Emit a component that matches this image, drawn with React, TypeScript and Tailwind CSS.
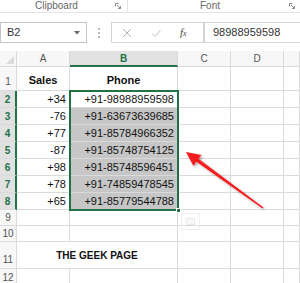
import React from "react";

const cols = [
  { key: "A", w: "w-[53px]" },
  { key: "B", w: "w-[108px]" },
  { key: "C", w: "w-[53px]" },
  { key: "D", w: "w-[53px]" },
  { key: "E", w: "flex-1" },
];

const data: [string, string][] = [
  ["+34", "+91-98988959598"],
  ["-76", "+91-63673639685"],
  ["+77", "+91-85784966352"],
  ["-87", "+91-85748754125"],
  ["+98", "+91-85748596451"],
  ["+78", "+91-74859478545"],
  ["+65", "+91-85779544788"],
];

const cell = "border-r border-b border-[#dadada] shrink-0";

function Launcher() {
  return (
    <svg width="6" height="6" viewBox="0 0 6 6" className="shrink-0">
      <path d="M0.5 0.5H3.5M0.5 0.5V3.5" stroke="#8a8a8a" strokeWidth="1" fill="none" />
      <path d="M2 2L5.5 5.5M5.5 3V5.5H3" stroke="#8a8a8a" strokeWidth="1" fill="none" />
    </svg>
  );
}

function RowHead({ n, sel, h, end }: { n: number; sel?: boolean; h: string; end?: boolean }) {
  return (
    <div
      className={`w-[17px] ${h} ${cell} flex ${end ? "items-end pb-[1px]" : "items-center"} justify-center text-[10px] ${
        sel ? "bg-[#e1e1e1] text-[#217346] font-bold border-r-2 border-r-[#217346]" : "bg-[#f7f7f7] text-[#555]"
      }`}
    >
      {n}
    </div>
  );
}

function EmptyCells({ h, from }: { h: string; from: number }) {
  return (
    <>
      {cols.slice(from).map((c) => (
        <div key={c.key} className={`${c.w} ${h} ${cell}`} />
      ))}
    </>
  );
}

export default function App() {
  return (
    <div className="relative w-[300px] h-[283px] overflow-hidden bg-white font-['Liberation_Sans',Arial,sans-serif]">
      {/* ribbon group labels */}
      <div className="h-[13px] flex border-b border-[#e3e3e3] text-[10px] text-[#666] leading-[12px]">
        <div className="w-[128px] flex items-center border-r border-[#e3e3e3] pl-[35px] pr-[6px]">
          <span>Clipboard</span>
          <span className="flex-1" />
          <Launcher />
        </div>
        <div className="flex-1 flex items-center pl-[72px] pr-[5px]">
          <span>Font</span>
          <span className="flex-1" />
          <Launcher />
        </div>
      </div>

      {/* formula bar */}
      <div className="h-[38px] pt-[9px] flex items-start">
        <div className="w-[87px] h-[21px] border border-[#c6c6c6] flex items-center pl-[6px] pr-[6px] text-[11px] text-[#333]">
          <span>B2</span>
          <span className="flex-1" />
          <svg width="6" height="4" viewBox="0 0 6 4">
            <path d="M0 0H6L3 3.5Z" fill="#666" />
          </svg>
        </div>
        <div className="w-[24px] h-[21px] flex flex-col items-center justify-center gap-[2px]">
          <span className="w-[2px] h-[2px] bg-[#bbb]" />
          <span className="w-[2px] h-[2px] bg-[#bbb]" />
          <span className="w-[2px] h-[2px] bg-[#bbb]" />
        </div>
        <div className="w-[93px] h-[21px] border border-[#d4d4d4] flex items-center text-[#b5b5b5]">
          <svg width="10" height="10" viewBox="0 0 10 10" className="ml-[10px]">
            <path d="M1 1L9 9M9 1L1 9" stroke="#b5b5b5" strokeWidth="1" />
          </svg>
          <svg width="10" height="10" viewBox="0 0 10 10" className="ml-[19px]">
            <path d="M1 5.5L4 8.5L9.5 2" stroke="#c4c4c4" strokeWidth="1" fill="none" />
          </svg>
          <span className="ml-[19px] text-[11px] italic text-[#444] font-['Liberation_Serif',serif]">
            f<span className="text-[8px]">x</span>
          </span>
        </div>
        <div className="flex-1 h-[21px] border border-[#d4d4d4] border-r-0 flex items-center pl-[8px] text-[11px] text-[#333]">
          98988959598
        </div>
      </div>

      {/* grid */}
      <div className="flex flex-col">
        {/* column headers */}
        <div className="flex h-[16px]">
          <div className={`w-[17px] h-[16px] ${cell} bg-[#f7f7f7] relative`}>
            <svg width="8" height="8" viewBox="0 0 8 8" className="absolute right-[2px] bottom-[2px]">
              <path d="M8 0V8H0Z" fill="#dcdcdc" />
            </svg>
          </div>
          {cols.map((c) => (
            <div
              key={c.key}
              className={`${c.w} h-[16px] ${cell} flex items-center justify-center text-[10px] ${
                c.key === "B"
                  ? "bg-[#e1e1e1] text-[#217346] font-bold border-b-2 border-b-[#217346]"
                  : "bg-[#f7f7f7] text-[#555]"
              }`}
            >
              {c.key === "E" ? "" : c.key}
            </div>
          ))}
        </div>

        {/* row 1 */}
        <div className="flex">
          <RowHead n={1} h="h-[24px]" end />
          <div className={`w-[53px] h-[24px] ${cell} flex items-end justify-center pb-[2px] text-[11px] font-bold text-[#111]`}>
            Sales
          </div>
          <div className={`w-[108px] h-[24px] ${cell} flex items-end justify-center pb-[2px] text-[11px] font-bold text-[#111]`}>
            Phone
          </div>
          <EmptyCells h="h-[24px]" from={2} />
        </div>

        {/* rows 2-8 */}
        {data.map(([s, p], i) => (
          <div key={i} className="flex">
            <RowHead n={i + 2} h="h-[17px]" sel />
            <div className={`w-[53px] h-[17px] ${cell} flex items-center justify-end pr-[3px] text-[11px] text-[#111]`}>
              {s}
            </div>
            <div
              className={`w-[108px] h-[17px] ${cell} flex items-center justify-end pr-[3px] text-[11px] text-[#111] ${
                i === 0 ? "bg-white" : "bg-[#c6c6c6]"
              }`}
            >
              {p}
            </div>
            <EmptyCells h="h-[17px]" from={2} />
          </div>
        ))}

        {/* rows 9, 10 */}
        {[9, 10].map((n) => (
          <div key={n} className="flex">
            <RowHead n={n} h="h-[16px]" />
            <EmptyCells h="h-[16px]" from={0} />
          </div>
        ))}

        {/* row 11 */}
        <div className="flex">
          <RowHead n={11} h="h-[27px]" end />
          <div className={`w-[161px] h-[27px] ${cell} flex items-center justify-center text-[10px] font-bold text-[#111]`}>
            THE GEEK PAGE
          </div>
          <EmptyCells h="h-[27px]" from={2} />
        </div>

        {/* row 12 */}
        <div className="flex">
          <RowHead n={12} h="h-[17px]" />
          <EmptyCells h="h-[17px]" from={0} />
        </div>
      </div>

      {/* selection outline B2:B8 */}
      <div className="absolute left-[69px] top-[90px] w-[110px] h-[121px] border-2 border-[#217346] pointer-events-none" />
      <div className="absolute left-[176px] top-[208px] w-[5px] h-[5px] bg-[#217346] border border-white" />

      {/* quick analysis ghost */}
      <div className="absolute left-[181px] top-[213px] w-[19px] h-[17px] border border-[#efefef] flex items-center justify-center">
        <div className="w-[9px] h-[7px] border border-[#ececec] bg-[#f8f8f8]" />
      </div>

      {/* red arrow */}
      <svg className="absolute left-0 top-0 pointer-events-none" width="300" height="283" viewBox="0 0 300 283">
        <defs>
          <filter id="sh" x="-20%" y="-20%" width="140%" height="140%">
            <feDropShadow dx="1.5" dy="1.5" stdDeviation="1.2" floodColor="#000" floodOpacity="0.35" />
          </filter>
        </defs>
        <polygon
          points="186,152 201.5,155 198.4,158.8 263.5,207.4 262.6,208.6 196.2,161.6 193.5,166"
          fill="#f41c1c"
          filter="url(#sh)"
        />
      </svg>
    </div>
  );
}
